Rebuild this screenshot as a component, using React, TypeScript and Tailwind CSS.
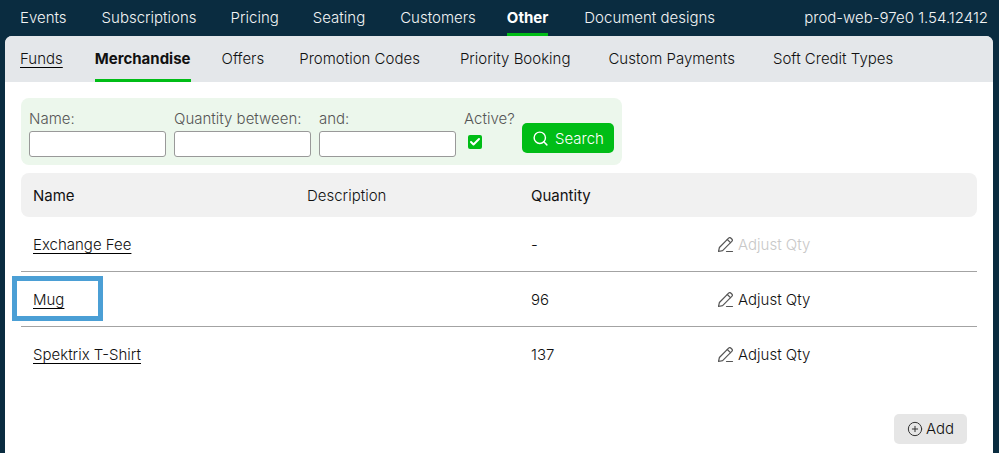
import React from 'react';
import { Search, CirclePlus, Check } from 'lucide-react';

const font = { fontFamily: 'Inter, "Liberation Sans", sans-serif' };

const PencilLine: React.FC = () => (
  <svg width="17" height="17" viewBox="1 1 17 17" fill="none" stroke="#555" strokeWidth="1.2" strokeLinejoin="round" strokeLinecap="round" className="shrink-0">
    <path d="M1.5 15.5l.9-4L11.6 2.2a1.7 1.7 0 0 1 2.4 0l.8.8a1.7 1.7 0 0 1 0 2.4L5.6 14.6l-4.100 .9z" />
    <path d="M10.300 3.500l3.200 3.200" />
    <path d="M9.500 15.500h6" />
  </svg>
);

const topNav = [
  { label: 'Events', cls: 'mr-[35px]' },
  { label: 'Subscriptions', cls: 'mr-[34px]' },
  { label: 'Pricing', cls: 'mr-[34px]' },
  { label: 'Seating', cls: 'mr-[35px]' },
  { label: 'Customers', cls: 'mr-[31px]' },
  { label: 'Other', cls: 'mr-[36px]' },
  { label: 'Document designs', cls: '' },
];
const subNav = [
  { label: 'Funds', cls: 'mr-[32px]' },
  { label: 'Merchandise', cls: 'mr-[31px]' },
  { label: 'Offers', cls: 'mr-[35px]' },
  { label: 'Promotion Codes', cls: 'mr-[40px]' },
  { label: 'Priority Booking', cls: 'mr-[38px]' },
  { label: 'Custom Payments', cls: 'mr-[38px]' },
  { label: 'Soft Credit Types', cls: '' },
];
const rows = [
  { name: 'Exchange Fee', qty: '-', disabled: true },
  { name: 'Mug', qty: '96', disabled: false },
  { name: 'Spektrix T-Shirt', qty: '137', disabled: false },
];

const Field: React.FC<{ label: string }> = ({ label }) => (
  <div className="flex flex-col w-[137px]">
    <label className="text-[15px] leading-[18px] text-[#555] font-light whitespace-nowrap h-[25px] pt-[4px]">{label}</label>
    <input className="h-[26px] w-[137px] bg-white border border-[#999] rounded-[3px]" />
  </div>
);

export default function App() {
  return (
    <div className="relative h-[453px] w-[999px] overflow-hidden bg-[#0a2c40] pl-[5px] pr-[6px]" style={font}>
      <nav className="h-[36px] flex items-stretch justify-between pl-[15px] pr-[5px] text-[15px] text-[#f2f4f5]">
        <ul className="flex">
          {topNav.map((item) => (
            <li key={item.label} className={`h-[36px] flex items-center ${item.cls} ${item.label === 'Other' ? 'font-bold text-white border-b-[3px] border-[#00bd16] pt-[3px]' : 'font-light'}`}>
              {item.label}
            </li>
          ))}
        </ul>
        <div className="flex items-center font-light">prod-web-97e0 1.54.12412</div>
      </nav>

      <main className="bg-white rounded-t-[7px] h-[417px]">
        <ul className="h-[46px] bg-[#e4e7ea] rounded-t-[7px] flex pl-[15px] text-[15px] text-[#111]">
          {subNav.map((item) => (
            <li key={item.label} className={`h-[46px] flex items-center ${item.cls} ${item.label === 'Merchandise' ? 'font-bold border-b-[3px] border-[#00bd16] pt-[3px]' : 'font-light'}`}>
              <span className={item.label === 'Funds' ? 'underline underline-offset-[3px] decoration-black' : ''}>{item.label}</span>
            </li>
          ))}
        </ul>

        <div className="px-[16px] pt-[16px]">
          <form className="w-[601px] h-[67px] bg-[#ecf7ec] rounded-[8px] pl-[8px] pt-[8px] flex gap-[8px]">
            <Field label="Name:" />
            <Field label="Quantity between:" />
            <Field label="and:" />
            <div className="flex flex-col w-[50px]">
              <span className="text-[15px] leading-[18px] text-[#555] font-light h-[25px] pt-[4px] whitespace-nowrap">Active?</span>
              <span className="ml-[4px] mt-[4px] w-[14px] h-[14px] rounded-[2px] bg-[#00bd16] flex items-center justify-center">
                <Check size={12} color="#fff" strokeWidth={4} />
              </span>
            </div>
            <button type="button" className="mt-[17px] h-[30px] w-[92px] bg-[#00bd16] rounded-[5px] flex items-center justify-center gap-[6px] text-white text-[15px] font-light">
              <Search size={17} strokeWidth={2} />
              <span className="pt-[2px]">Search</span>
            </button>
          </form>

          <div className="mt-[8px] w-[956px]">
            <div className="h-[44px] bg-[#f1f1f1] rounded-[8px] grid grid-cols-[274px_224px_187px_1fr] pl-[12px] pt-[2px] items-center text-[15px] text-[#111] font-normal">
              <div>Name</div>
              <div className="font-light">Description</div>
              <div>Quantity</div>
              <div />
            </div>
            {rows.map((row, i) => (
              <div key={row.name} className={`h-[55px] grid grid-cols-[274px_224px_187px_1fr] pl-[12px] items-center text-[15px] text-[#111] font-light ${i < 2 ? 'border-b border-[#a3a3a3] pt-[2px]' : 'pt-[1px]'}`}>
                <a className="underline underline-offset-[3px] decoration-black">{row.name}</a>
                <div />
                <div>{row.qty}</div>
                <div className={`flex items-center gap-[3px] ${row.disabled ? 'text-[#c8c8c8]' : ''}`}>
                  <PencilLine />
                  Adjust Qty
                </div>
              </div>
            ))}
          </div>

          <div className="flex justify-end w-[946px] mt-[32px]">
            <button type="button" className="w-[73px] h-[30px] bg-[#e6e6e6] rounded-[5px] flex items-center justify-center gap-[3px] text-[15px] text-[#111] font-light">
              <CirclePlus size={16} strokeWidth={1.5} color="#333" />
              Add
            </button>
          </div>
        </div>
      </main>

      {/* highlight box added on the screenshot */}
      <div className="absolute left-[12px] top-[276px] w-[91px] h-[45px] border-[5px] border-[#4b9fd5]" />
    </div>
  );
}
